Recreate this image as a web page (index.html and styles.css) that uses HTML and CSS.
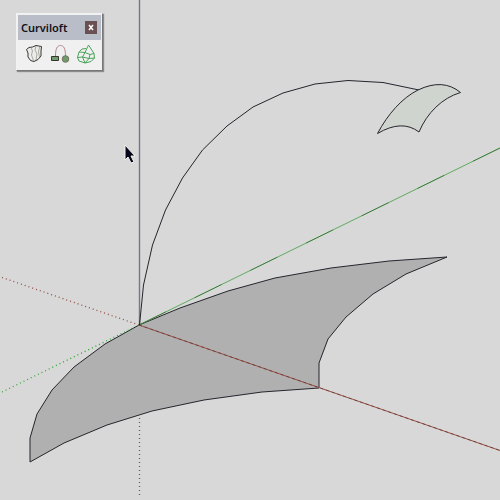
FILE: index.html
```
<!DOCTYPE html>
<html lang="en">
<head>
<meta charset="utf-8">
<title>Curviloft</title>
<link rel="stylesheet" href="styles.css">
</head>
<body>
<main class="workspace">
  <svg class="scene" viewBox="0 0 500 500" role="img" aria-label="3D model view">
    <polygon class="face" points="139,325 105,344 74,367 52,390 37,414 30,438 30,462 64,443 107,425 152,411 204,400 262,392 319,388 319,363 328,339 346,317 373,294 406,274 447,257 389,261 331,268 275,278 228,291 180,308"/>
    <path class="axis hidden-axis red-dots" d="M2 277.500L139 325"/>
    <path class="axis hidden-axis green-dots" d="M2 392L139 325"/>
    <path class="axis hidden-axis blue-dots" d="M139.500 418V498"/>
    <path class="axis blue" d="M139.500 0V325"/>
    <path class="axis green" d="M139 325L500 148"/>
    <path class="axis green-dark" d="M139 325L500 148"/>
    <path class="axis red" d="M139 325L500 450.500"/>
    <path class="axis red-dark" d="M139 325L500 450.500"/>
    <polyline class="edge" points="139.500,325 143.500,285 152.500,245 165.500,210 182.500,178 202.500,150 227,126 253,107 283,93 315,84 348,80.500 383,82.500 419,90"/>
    <path class="patch" d="M377.500 133.500C388 114 402 98 418 90Q443 78 460.500 92.500C442 98 427 113 419 132Q402 119 377.500 133.500Z"/>
  </svg>
  <svg class="cursor" viewBox="0 0 13 22" aria-hidden="true">
    <path d="M2 2V17L5 14L8 20L11 19L8 13H12Z"/>
  </svg>
  <section class="palette" aria-label="Curviloft toolbar">
    <header class="palette-title">
      <h1>Curviloft</h1>
      <button class="close" type="button" aria-label="Close">
        <svg viewBox="0 0 12 13"><path d="M4 4L8 9M8 4L4 9"/></svg>
      </button>
    </header>
    <div class="tools">
      <button type="button" aria-label="Loft by spline">
        <svg viewBox="0 0 20 20">
          <path class="ink pale" d="M2.500 5.500L5 3.500L8.500 3L12 1.500L17.500 2.500L17 7V12L14 15.500L10 17.500L6.500 16.500L4 13L4 9Z"/>
          <path class="soft" d="M7 3.500L8.500 7L7.500 11L9.500 16.500M12 2L11 6L13 10L12 16M15.500 3L14.500 8L15.500 13"/>
        </svg>
      </button>
      <button type="button" aria-label="Loft along path">
        <svg viewBox="0 0 20 20">
          <path class="rose" d="M5.500 12C5.500 5 7 1.500 10.500 1.500C14 1.500 15.500 5 15.500 12"/>
          <path class="ink fill-green" d="M1.500 12.500H8.500V16.500H1.500Z"/>
          <circle class="olive fill-green" cx="15.500" cy="15" r="3.300"/>
        </svg>
      </button>
      <button type="button" aria-label="Skin contours">
        <svg viewBox="0 0 20 20">
          <path class="leaf" d="M9 8.500L12.500 1L18 9.500L18.500 14L15 17.500L9 19L3 17L1.500 13.500L3 8L6 5L10 4.500M3 8L9 8.500L14 10.500L18 9.500M9 8.500L6.500 13L1.500 13.500M6.500 13L9 19M6.500 13L13 14.500L18.500 14M13 14.500L14 10.500M13 14.500L9 19"/>
        </svg>
      </button>
    </div>
  </section>
</main>
</body>
</html>
```

FILE: styles.css
```
* { box-sizing: border-box; }

body {
  margin: 0;
  background: #d8d8d8;
  font-family: "Noto Sans", "Open Sans", sans-serif;
}

.workspace {
  position: relative;
  overflow: hidden;
}

.scene {
  display: block;
  width: 100%;
  height: auto;
}

.face { fill: #b0b0b0; stroke: #25252d; stroke-width: 1; }
.edge { fill: none; stroke: #25252d; stroke-width: 1; }
.patch { fill: #cfd4cf; stroke: #25252d; stroke-width: 1; }

.axis { fill: none; stroke-width: 1; }
.blue { stroke: #77778c; stroke-width: 1.4; }
.green { stroke: #5eaa5e; }
.green-dark { stroke: #145014; stroke-dasharray: 30 32; opacity: 0.5; }
.red { stroke: #a04c40; }
.red-dark { stroke: #3c3434; stroke-dasharray: 3 3; opacity: 0.6; }
.hidden-axis { stroke-dasharray: 1 3; stroke-width: 1.3; }
.red-dots { stroke: #954a42; }
.green-dots { stroke: #2fa52f; }
.blue-dots { stroke: #60606c; }

.cursor {
  position: absolute;
  left: 123px;
  top: 143px;
  width: 13px;
  height: 22px;
}
.cursor path { fill: #07071c; stroke: #f4f4ee; stroke-width: 1; }

.palette {
  position: absolute;
  left: 16px;
  top: 13px;
  display: flex;
  flex-direction: column;
  padding: 1px;
  background: #f0f0f0;
  border: 1px solid;
  border-color: #f2f2f2 #77777a #77777a #f2f2f2;
  box-shadow: 1px 1px 1px #8c8c8c;
}

.palette-title {
  display: flex;
  align-items: center;
  justify-content: space-between;
  height: 25px;
  padding: 0 4px 0 3px;
  background: #b9bdc7;
}

.palette-title h1 {
  margin: 0;
  color: #101018;
  font-size: 11px;
  font-weight: 600;
  line-height: 16px;
}

.close {
  width: 12px;
  height: 13px;
  padding: 0;
  border: 0;
  background: #6b5053;
}
.close svg { display: block; width: 12px; height: 13px; }
.close path { stroke: #fff; stroke-width: 1.5; }

.tools {
  display: flex;
  gap: 6px;
  padding: 4px 5px 5px 6px;
}
.tools button {
  padding: 0;
  border: 0;
  background: transparent;
}
.tools svg { display: block; width: 20px; height: 20px; }
.tools path { fill: none; stroke-width: 1; }
.tools .ink { stroke: #34372f; }
.tools .olive { stroke: #74765a; }
.tools .pale { fill: #ececea; }
.tools .soft { stroke: #8c8e86; stroke-width: 0.7; }
.tools .rose { stroke: #b78489; }
.tools .fill-green { fill: #6f9b6f; }
.tools .leaf { stroke: #4aa35a; }
```
